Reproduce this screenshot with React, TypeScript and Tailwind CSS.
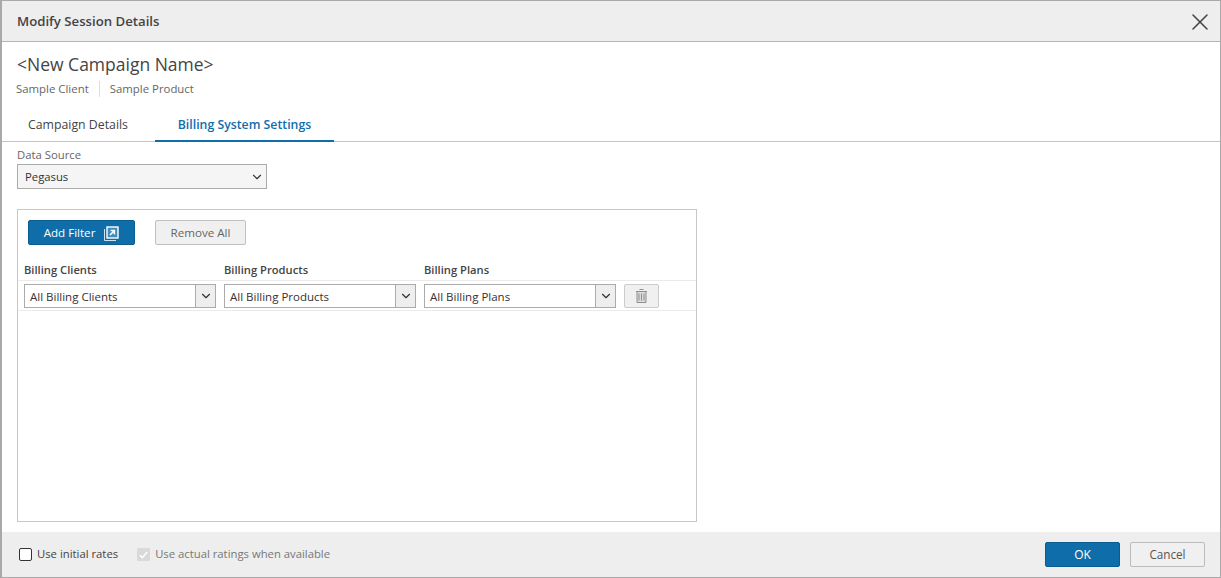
import { ChevronDown, X } from "lucide-react"

const font = "font-['Open_Sans','Noto_Sans',sans-serif]"

function FilterSelect({ label }: { label: string }) {
  return (
    <div className="flex h-6 w-48 border border-[#ababab] bg-white">
      <div className="flex-1 pl-[5px] text-[11.5px] leading-[23px] text-[#333]">{label}</div>
      <div className="flex w-[20px] items-center justify-center border-l border-[#ababab] bg-[#eee]">
        <ChevronDown className="h-3.5 w-3.5 text-[#333]" strokeWidth={2} />
      </div>
    </div>
  )
}

function TrashIcon() {
  return (
    <svg width="11" height="14" viewBox="0 0 11 14" fill="none" stroke="#8f8f8f">
      <path d="M1 2.5h9v11H1z" fill="#dcdcdc" />
      <path d="M3.5 .5h4M0 2.5h11M3 4.5v7M5.5 4.5v7M8 4.5v7" />
    </svg>
  )
}

function PopoutIcon() {
  return (
    <svg width="15" height="15" viewBox="0 0 15 15" fill="none">
      <path d="M.5 3v11.5H12" stroke="#cfe2ef" />
      <rect x="3" y="1" width="11" height="11" fill="#ffffff33" stroke="#fff" strokeWidth="1.4" />
      <path d="M6 9l3.6-3.6M6.6 4.6h3.8v3.8" stroke="#fff" strokeWidth="1.5" />
    </svg>
  )
}

export default function App() {
  return (
    <div className={`${font} flex h-[578px] w-[1221px] flex-col overflow-hidden border border-l-2 border-[#a9a9a9] bg-white text-[#333]`}>
      <div className="flex h-[41px] shrink-0 items-center justify-between border-b border-[#b4b4b4] bg-[#eee] pl-[15px] pr-[6px] pt-[2px]">
        <div className="text-[13.2px] font-semibold text-[#444]">Modify Session Details</div>
        <X className="h-7 w-7 text-[#444]" strokeWidth={1.3} />
      </div>

      <div className="flex min-h-0 flex-1 flex-col">
        <div className="pl-[14px] pt-[9px]">
          <div className="pl-px text-[17.5px] leading-[26px] text-[#444]">&lt;New Campaign Name&gt;</div>
          <div className="mt-[3px] flex h-[18px] items-center text-[11.4px] text-[#666]">
            <span className="pr-[10px]">Sample Client</span>
            <span className="border-l border-[#ddd] pl-[10px] leading-4">Sample Product</span>
          </div>
        </div>

        <div className="mt-[7px] flex h-[37px] shrink-0 border-b border-[#c4c4c4] text-[12.3px]">
          <div className="w-[153px] pl-[11px] pt-[11px] text-[#444]">
            <span className="pl-[15px]">Campaign Details</span>
          </div>
          <div className="h-[37px] w-[179px] border-b-2 border-[#0f6eaa] pt-[11px] text-center font-semibold text-[#0f6eaa]">
            Billing System Settings
          </div>
        </div>

        <div className="flex min-h-0 flex-1 flex-col pl-[15px]">
          <div className="mt-[6px] text-[11.3px] leading-[14px] text-[#666]">Data Source</div>
          <div className="mt-[2px] flex h-[25px] w-[250px] items-center justify-between border border-[#ababab] bg-[#f5f5f5] pl-[7px] pr-[2px] pt-px text-[11.3px]">
            <span>Pegasus</span>
            <ChevronDown className="h-3.5 w-3.5 text-[#333]" strokeWidth={2} />
          </div>

          <div className="mb-[10px] mt-5 flex w-[680px] flex-1 flex-col border border-[#c8c8c8]">
            <div className="flex gap-5 pl-[10px] pt-[10px]">
              <button className="flex h-[25px] w-[107px] items-center justify-center gap-[9px] rounded-[2px] border border-[#0c5c8f] bg-[#0f6eaa] pt-px text-[11.6px] text-white">
                Add Filter <PopoutIcon />
              </button>
              <button className="h-[25px] w-[91px] rounded-[2px] border border-[#c0c0c0] bg-[#f0f0f0] pt-px text-[11.6px] text-[#666]">
                Remove All
              </button>
            </div>

            <div className="mt-[14px] flex h-[22px] gap-2 border-b border-[#eaeaea] pl-[6px] pt-[3px] text-[11.2px] font-semibold text-[#444]">
              <div className="w-48">Billing Clients</div>
              <div className="w-48">Billing Products</div>
              <div className="w-48">Billing Plans</div>
            </div>

            <div className="flex h-[30px] items-start gap-2 border-b border-[#eaeaea] pl-[6px] pt-[3px]">
              <FilterSelect label="All Billing Clients" />
              <FilterSelect label="All Billing Products" />
              <FilterSelect label="All Billing Plans" />
              <div className="flex h-6 w-[35px] items-center justify-center rounded-[2px] border border-[#ccc] bg-[#f0f0f0]">
                <TrashIcon />
              </div>
            </div>
          </div>
        </div>
      </div>

      <div className="flex h-[45px] shrink-0 items-center justify-between bg-[#eee] pl-[17px] pr-[15px] text-[11.3px]">
        <div className="flex items-center">
          <span className="h-[13px] w-[13px] rounded-[2px] border border-[#333] bg-white" />
          <span className="ml-[5px] text-[#444]">Use initial rates</span>
          <span className="ml-[19px] flex h-[13px] w-[13px] items-center justify-center rounded-[1px] bg-[#d9d9d9] text-white">
            <svg width="9" height="8" viewBox="0 0 9 8" fill="none" stroke="#fff" strokeWidth="1.5">
              <path d="M.8 4.2l2.5 2.5L8.2 1" />
            </svg>
          </span>
          <span className="ml-[5px] text-[#777]">Use actual ratings when available</span>
        </div>
        <div className="flex gap-[10px]">
          <button className="h-[25px] w-[75px] rounded-[2px] border border-[#0c5c8f] bg-[#0f6eaa] text-xs text-white">OK</button>
          <button className="h-[25px] w-[75px] rounded-[2px] border border-[#bbb] bg-[#f0f0f0] text-[11.7px] text-[#555]">Cancel</button>
        </div>
      </div>
    </div>
  )
}
